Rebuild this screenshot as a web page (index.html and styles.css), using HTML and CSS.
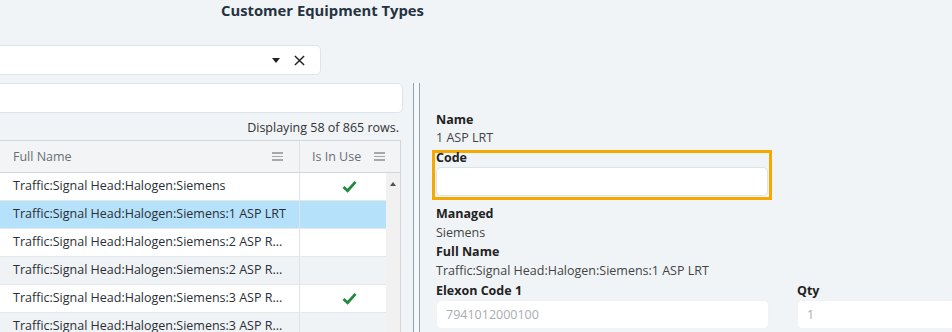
FILE: index.html
```html
<!DOCTYPE html>
<html lang="en">
<head>
    <meta charset="UTF-8">
    <title>Customer Equipment Types</title>
    <link rel="stylesheet" href="styles.css">
</head>
<body>

<div class="page-title">Customer Equipment Types</div>

<div class="toolbar">
    <div class="combo">
        <span class="combo-caret"></span>
        <svg class="combo-clear" viewBox="0 0 12 12"><path d="M1 1 L11 11 M11 1 L1 11"/></svg>
    </div>
</div>

<div class="main">
    <div class="left-pane">
        <div class="search-box"></div>
        <div class="rows-info">Displaying 58 of 865 rows.</div>

        <div class="grid">
            <div class="grid-head">
                <div class="cell col-name">Full Name <span class="menu-icon"></span></div>
                <div class="cell col-use">Is In Use <span class="menu-icon"></span></div>
            </div>
            <div class="grid-body">
                <div class="grid-rows">
                    <div class="row">
                        <div class="cell col-name">Traffic:Signal Head:Halogen:Siemens</div>
                        <div class="cell col-use"><svg class="check" viewBox="0 0 16 14"><path d="M1.5 7.5 L6 11.5 L14.5 2"/></svg></div>
                    </div>
                    <div class="row selected">
                        <div class="cell col-name">Traffic:Signal Head:Halogen:Siemens:1 ASP LRT</div>
                        <div class="cell col-use"></div>
                    </div>
                    <div class="row">
                        <div class="cell col-name">Traffic:Signal Head:Halogen:Siemens:2 ASP R...</div>
                        <div class="cell col-use"></div>
                    </div>
                    <div class="row alt">
                        <div class="cell col-name">Traffic:Signal Head:Halogen:Siemens:2 ASP R...</div>
                        <div class="cell col-use"></div>
                    </div>
                    <div class="row">
                        <div class="cell col-name">Traffic:Signal Head:Halogen:Siemens:3 ASP R...</div>
                        <div class="cell col-use"><svg class="check" viewBox="0 0 16 14"><path d="M1.5 7.5 L6 11.5 L14.5 2"/></svg></div>
                    </div>
                    <div class="row alt">
                        <div class="cell col-name">Traffic:Signal Head:Halogen:Siemens:3 ASP R...</div>
                        <div class="cell col-use"></div>
                    </div>
                </div>
                <div class="scrollbar"><span class="scroll-up"></span></div>
            </div>
        </div>
    </div>

    <div class="splitter"></div>

    <div class="right-pane">
        <div class="field">
            <div class="label">Name</div>
            <div class="value first">1 ASP LRT</div>
        </div>
        <div class="field focus-box">
            <div class="label">Code</div>
            <div class="input"></div>
        </div>
        <div class="field">
            <div class="label">Managed</div>
            <div class="value">Siemens</div>
        </div>
        <div class="field">
            <div class="label">Full Name</div>
            <div class="value">Traffic:Signal Head:Halogen:Siemens:1 ASP LRT</div>
        </div>
        <div class="field-row">
            <div class="field elexon">
                <div class="label">Elexon Code 1</div>
                <div class="input disabled">7941012000100</div>
            </div>
            <div class="field qty">
                <div class="label">Qty</div>
                <div class="input disabled">1</div>
            </div>
        </div>
    </div>
</div>

</body>
</html>
```

FILE: styles.css
```css
body {
    margin: 0;
    background-color: #f0f4f7;
    font-family: 'Open Sans', 'Noto Sans', sans-serif;
    font-size: 12.5px;
    color: #333;
    overflow: hidden;
    height: 332px;
}

.page-title {
    padding: 0 0 0 221px;
    height: 20px;
    line-height: 20px;
    font-size: 14.8px;
    font-weight: bold;
    color: #253240;
}

.toolbar {
    padding-top: 25px;
    height: 30px;
}

.combo {
    margin-left: -10px;
    width: 331px;
    height: 30px;
    background: #fff;
    border: 1px solid #dde3ea;
    border-radius: 5px;
    display: flex;
    align-items: center;
    justify-content: flex-end;
    padding-right: 15px;
    box-sizing: border-box;
}

.combo-caret {
    width: 0;
    height: 0;
    border-left: 4px solid transparent;
    border-right: 4px solid transparent;
    border-top: 5px solid #222;
    margin-right: 14px;
}

.combo-clear {
    width: 11px;
    height: 11px;
    fill: none;
    stroke: #222;
    stroke-width: 1.6;
}

.main {
    display: flex;
    margin-top: 8px;
}

.left-pane {
    width: 423px;
    margin-left: -10px;
    flex-shrink: 0;
}

.search-box {
    width: 413px;
    height: 30px;
    background: #fff;
    border: 1px solid #dde3ea;
    border-radius: 5px;
    box-sizing: border-box;
}

.rows-info {
    width: 413px;
    box-sizing: border-box;
    text-align: right;
    padding-right: 4px;
    height: 27px;
    line-height: 30px;
    font-size: 12.5px;
    color: #333;
}

.grid {
    width: 410px;
    border-top: 1px solid #cfd6de;
    border-right: 1px solid #cfd6de;
}

.grid-head {
    display: flex;
    height: 31px;
    background: #f2f4f6;
    border-bottom: 1px solid #cfd6de;
}

.grid-head .cell {
    display: flex;
    align-items: center;
    justify-content: space-between;
    color: #6a6f75;
    font-size: 12.5px;
}

.cell {
    box-sizing: border-box;
    padding-left: 23px;
    white-space: nowrap;
}

.col-name {
    width: 310px;
    border-right: 1px solid #dfe3e8;
    padding-right: 16px;
}

.grid-head .col-use {
    width: 99px;
    padding-left: 12px;
    padding-right: 14px;
}

.menu-icon {
    width: 11px;
    height: 9px;
    background: linear-gradient(#a5a9ae 0 2px, transparent 2px 4px, #a5a9ae 4px 5px, transparent 5px 7px, #a5a9ae 7px 9px);
}

.grid-body {
    display: flex;
}

.grid-rows {
    width: 396px;
}

.row {
    display: flex;
    height: 27px;
    background: #fff;
    border-bottom: 1px solid #e4e8ec;
}

.row.alt {
    background: #f0f3f6;
}

.row.selected {
    background: #b5e1fb;
}

.row .cell {
    line-height: 26px;
    font-size: 12.5px;
    color: #2a2f35;
}

.row .col-use {
    width: 86px;
    padding: 0;
    display: flex;
    align-items: center;
    justify-content: center;
    padding-left: 12px;
}

.check {
    width: 15px;
    height: 13px;
    fill: none;
    stroke: #1f8a3d;
    stroke-width: 3;
}

.scrollbar {
    width: 14px;
    background: #f1f1f1;
    display: flex;
    justify-content: center;
}

.scroll-up {
    width: 0;
    height: 0;
    margin-top: 9px;
    border-left: 3.5px solid transparent;
    border-right: 3.5px solid transparent;
    border-bottom: 4px solid #505050;
}

.splitter {
    width: 5px;
    height: 260px;
    border-left: 1px solid #8fa2b6;
    border-right: 1px solid #8fa2b6;
    background: #f6f8fa;
    flex-shrink: 0;
}

.right-pane {
    flex: 1;
    padding: 27px 0 0 16px;
}

.field {
    width: 333px;
}

.label {
    font-weight: bold;
    font-size: 12.5px;
    color: #222;
    height: 19px;
    line-height: 19px;
}

.value {
    font-size: 12.5px;
    color: #444;
    height: 19px;
    line-height: 19px;
}

.value.first {
    height: 18px;
    line-height: 18px;
}

.input {
    height: 29px;
    background: #fff;
    border: 1px solid #dde3ea;
    border-radius: 5px;
    box-sizing: border-box;
}

.focus-box {
    margin: 3px 0 4px -4px;
    border: 3px solid #f5a900;
    padding: 0 1px 1px 1px;
    width: 340px;
    height: 50px;
    box-sizing: border-box;
}

.focus-box .label {
    height: 14px;
    line-height: 9px;
}

.field-row {
    display: flex;
    gap: 28px;
    margin-top: 1px;
}

.input.disabled {
    border-color: #f0f2f5;
    color: #a8adb3;
    line-height: 27px;
    padding-left: 9px;
    font-size: 12.5px;
}

.qty {
    width: 160px;
}
```
